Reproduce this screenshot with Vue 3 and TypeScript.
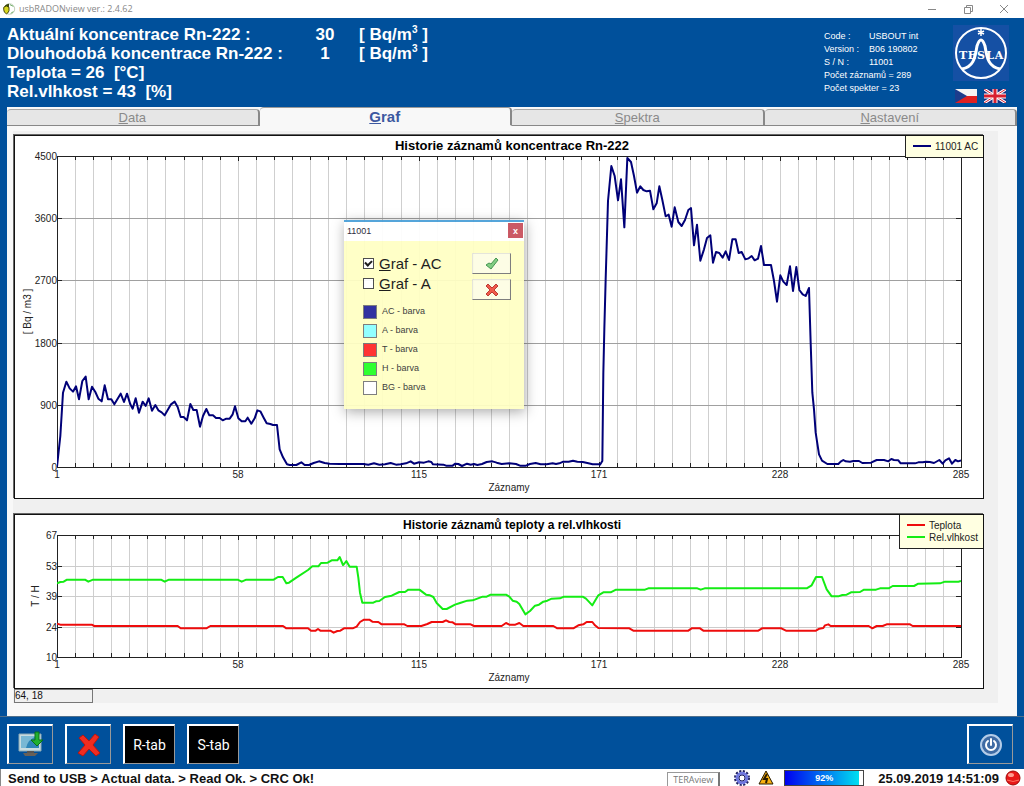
<script setup lang="ts">
import { ref } from 'vue'

interface Series { name: string; color: string; points: string }
interface Chart {
  id: string
  title: string
  titleSize: 'large' | 'small'
  yTitle: string
  height: number
  plotHeight: number
  yLabels: string[]
  gridColor: string
  legend: { x: number; width: number; height: number }
  series: Series[]
}

type Run = [dx: number, dy: number, points: string]

/* Joins recorded runs into one polyline, each run shifted to its own origin. */
function join(runs: Run[]): string {
  return runs
    .map(([dx, dy, pts]) =>
      pts.split(' ').map((p) => {
        const [x, y] = p.split(',').map(Number)
        return `${x + dx},${y + dy}`
      }).join(' '))
    .join(' ')
}

const radon = join([
  [-172, -80, '172,1012 182,920 190,790 200,757 210,777 220,787 229,771 238,810 248,755 258,742 267,810 277,772 287,788 296,808 306,816 315,768 325,810 335,810 344,825 363,793 373,818 382,793 392,825 399,838 408,807 418,850 429,817 438,830 447,807 457,844 467,827 476,843 486,849 495,858 514,825 525,817 534,833 543,863 552,863 562,873 572,824 581,842 591,842 601,892 610,860 620,839 629,858 640,858 649,866 660,866 669,873 680,868 690,868 699,855 706,831 716,867 726,876 737,876 744,865 755,883 765,867 773,843 782,846 792,865 801,882 812,884 820,887 832,887 840,960 850,984 862,1005 870,1007 890,1007 905,999 915,1007 928,1007 942,1001 958,996 975,1001 990,1003 1020,1004'],
  [639, 730, '280,194 295,196 312,192 328,196 345,195 362,191 378,196 392,195 408,192 422,186 432,193 447,189 462,190 475,186 484,188 489,195 520,196 528,199 548,199 556,193 565,194 576,200 591,193 602,196 612,194 622,197 636,194 650,188 667,186 680,190 695,194 718,192 738,194 750,199 768,199 780,194 797,191 812,195 830,195 848,192 858,194 868,192 880,187 896,187 909,184 922,187 938,188 952,191 968,195 990,195'],
  [1599, -80, '30,1006 37,995 40,730 43,600 47,450 54,215 64,110 74,140 84,213 93,150 103,294 112,86 123,98 132,140 141,190 151,171 160,182 170,186 180,184 190,240 200,222 208,171 217,212 227,261 236,256 245,292 254,234 265,278 275,290 285,272 295,242 303,236 312,348 321,286 331,394 342,360 351,326 361,318 369,400 378,368 388,371 398,385 407,366 417,392 427,330 437,330 446,371 455,368 466,390 476,387 485,380 494,393 504,388 513,350 522,407 543,407 552,455 561,517 571,438 580,457 590,467 600,411 609,485 619,413 628,482 638,495 647,500 657,476 662,640 667,790 672,840 677,910'],
  [2229, 820, '57,75 66,94 82,104 115,104 122,97 130,92 137,96 150,97 160,95 177,95 187,101 213,100 230,92 252,92 265,96 274,89 282,92 295,93 302,102 345,102 355,99 368,99 378,97 390,98 402,101 418,92 428,103 436,93 447,87 456,103 466,92 474,96 483,93'],
])

const humidity = join([
  [-172, -77, '172,222 182,218 192,217 202,211 256,211 266,217 280,211 484,211 495,217 508,211 714,211 726,217 740,211 822,211 835,203 849,203 860,222 868,220 890,205 925,182 938,171 956,171 964,161 984,160 996,153 1013,153 1020,143 1030,167'],
  [849, -77, '10,167 19,155 29,172 50,172 55,205 60,250 67,280 100,280 108,276 118,275 135,263 155,259 178,248 195,248 205,241 238,241 258,256 270,258 280,263 290,281 308,299 320,299 345,286 360,281 382,274 398,273 428,262 440,262 452,256 498,256 508,262 518,274 530,277 538,284 556,315 570,305 585,289 597,286 610,277 622,274 635,268 660,267 672,262 728,262 738,268 757,288 775,258 790,249 812,249 828,241 915,241 925,237 1020,237'],
  [1869, -77, '0,237 52,237 62,241 74,237 380,237 395,228 408,203 426,203 440,240 455,261 475,261 487,257 500,256 513,249 540,248 552,241 588,241 600,237 626,237 638,230 702,230 715,223 780,222 795,217 835,217 843,215'],
])

const temperature = join([
  [-172, -77, '172,343 182,346 276,346 284,350 534,350 543,357 620,357 632,350 850,350 860,357 925,357 934,364 948,364 955,359 962,364 992,364 1002,370 1013,365 1022,364'],
  [849, -77, '12,357 38,357 50,352 60,338 72,331 88,331 97,337 115,338 125,345 193,345 202,350 244,350 262,344 275,338 308,338 318,333 328,338 338,339 347,345 392,345 402,350 485,350 498,341 508,346 526,346 538,341 550,350 640,350 652,357 700,357 715,348 730,345 740,338 757,338 765,348 775,356 868,357 880,364 1020,364'],
  [1869, -77, '0,364 25,364 35,357 60,357 70,364 235,364 246,357 304,357 318,364 408,364 418,358 430,356 435,348 445,345 452,350 566,350 577,357 590,350 608,350 620,345 690,345 698,350 843,350'],
])

const plotX = 43
const plotY = 21
const plotWidth = 904
const columns = 50
const xLabels = ['1', '58', '115', '171', '228', '285']

const charts: Chart[] = [
  {
    id: 'radon',
    title: 'Historie záznamů koncentrace Rn-222',
    titleSize: 'large',
    yTitle: '[ Bq / m3 ]',
    height: 363,
    plotHeight: 311,
    yLabels: ['4500', '3600', '2700', '1800', '900', '0'],
    gridColor: '#a0a0a0',
    legend: { x: 891, width: 78, height: 22 },
    series: [{ name: '11001 AC', color: '#000078', points: radon }],
  },
  {
    id: 'climate',
    title: 'Historie záznamů teploty a rel.vlhkosti',
    titleSize: 'small',
    yTitle: 'T / H',
    height: 174,
    plotHeight: 122,
    yLabels: ['67', '53', '39', '24', '10'],
    gridColor: '#cccccc',
    legend: { x: 885, width: 84, height: 34 },
    series: [
      { name: 'Teplota', color: '#ee0c0c', points: temperature },
      { name: 'Rel.vlhkost', color: '#14ec14', points: humidity },
    ],
  },
]

const rowY = (c: Chart, i: number) => plotY + Math.round((c.plotHeight * i) / (c.yLabels.length - 1))
const colX = (i: number) => plotX + Math.round((plotWidth * i) / columns)

const tabs = [
  { key: 'D', rest: 'ata' },
  { key: 'G', rest: 'raf' },
  { key: 'S', rest: 'pektra' },
  { key: 'N', rest: 'astavení' },
]
const activeTab = ref(1)

const readings = [
  { label: 'Aktuální koncentrace Rn-222 :', value: '30' },
  { label: 'Dlouhodobá koncentrace Rn-222 :', value: '1' },
]
const device = [
  ['Code :', 'USBOUT int'],
  ['Version :', 'B06 190802'],
  ['S / N :', '11001'],
]

const showAC = ref(true)
const showA = ref(false)
const swatches = [
  { id: 'ac', label: 'AC - barva' },
  { id: 'a', label: 'A - barva' },
  { id: 't', label: 'T - barva' },
  { id: 'h', label: 'H - barva' },
  { id: 'bg', label: 'BG - barva' },
]
const progress = ref(92)
</script>

<template>
  <div class="window">
    <header class="titlebar">
      <svg class="app-icon" viewBox="0 0 16 16" aria-hidden="true">
        <circle cx="8.500" cy="8" r="6" fill="#fff" stroke="#b8c8b0" />
        <path d="M8 2a6 6 0 0 0-6 6l6 1z" fill="#3c4a10" />
        <path d="M2 6q3-3 6 0v4q-1 3-3 3.500Q2 12 2 9z" fill="#d8d820" stroke="#333300" />
        <path d="M9 3l4 2M10 13l3-2" stroke="#58a050" />
      </svg>
      <span class="app-name">usbRADONview ver.: 2.4.62</span>
      <button class="win-btn" type="button" aria-label="Minimize">
        <svg viewBox="0 0 12 12"><path d="M2 6.500h8" /></svg>
      </button>
      <button class="win-btn" type="button" aria-label="Restore">
        <svg viewBox="0 0 12 12"><path d="M2.500 4.500h6v6h-6zM4.500 4.500v-2h6v6h-2" /></svg>
      </button>
      <button class="win-btn" type="button" aria-label="Close">
        <svg viewBox="0 0 12 12"><path d="M2 2l8 8M10 2l-8 8" /></svg>
      </button>
    </header>

    <section class="summary">
      <div class="readings">
        <div v-for="r in readings" :key="r.label" class="reading">
          <span>{{ r.label }}</span>
          <span class="value">{{ r.value }}</span>
          <span>[ Bq/m<sup>3</sup> ]</span>
        </div>
        <div>Teplota = 26&nbsp; [°C]</div>
        <div>Rel.vlhkost = 43&nbsp; [%]</div>
      </div>
      <div class="device">
        <div v-for="d in device" :key="d[0]" class="device-row"><span>{{ d[0] }}</span><span>{{ d[1] }}</span></div>
        <div>Počet záznamů = 289</div>
        <div>Počet spekter = 23</div>
      </div>
      <div class="brand">
        <svg class="logo" viewBox="0 0 56 56" role="img" aria-label="TESLA">
          <rect width="56" height="56" fill="#1550a4" />
          <circle cx="28" cy="28" r="25" fill="none" stroke="#fff" stroke-width="2" />
          <path d="M9 44C20 42 22 34 24 21q4-12 8 0C34 34 36 42 47 44" fill="none" stroke="#fff" stroke-width="3" />
          <path d="M28 4v7M25 6l6 3M31 6l-6 3" stroke="#fff" stroke-width="1.500" />
          <text x="10" y="34">T</text><text x="19" y="34">E</text><text x="28" y="34">S</text><text x="37" y="34">L</text><text x="46" y="34">A</text>
        </svg>
        <div class="flags">
          <button type="button" aria-label="Čeština">
            <svg viewBox="0 0 22 14"><path fill="#f4f4f4" d="M0 0h22v7H0z" /><path fill="#e02020" d="M0 7h22v7H0z" /><path fill="#1c3c8c" d="M0 0l12 7-12 7z" /></svg>
          </button>
          <button type="button" aria-label="English">
            <svg viewBox="0 0 22 14">
              <path fill="#1a2f80" d="M0 0h22v14H0z" />
              <path d="M0 0l22 14M22 0L0 14" stroke="#fff" stroke-width="3" />
              <path d="M0 0l22 14M22 0L0 14" stroke="#d82030" />
              <path d="M11 0v14M0 7h22" stroke="#fff" stroke-width="5" />
              <path d="M11 0v14M0 7h22" stroke="#d82030" stroke-width="3" />
            </svg>
          </button>
        </div>
      </div>
    </section>

    <main class="workspace">
      <div class="tabs" role="tablist">
        <button
          v-for="(t, i) in tabs" :key="t.key" type="button" role="tab"
          class="tab" :class="{ active: i === activeTab }" :aria-selected="i === activeTab"
          @click="activeTab = i"
        ><u>{{ t.key }}</u>{{ t.rest }}</button>
      </div>

      <div class="sheet">
        <div class="charts">
          <svg v-for="c in charts" :key="c.id" class="chart" :viewBox="`0 0 969 ${c.height}`" role="img" :aria-label="c.title">
            <rect x="0" y="0" width="969" :height="c.height" fill="#fff" />
            <g shape-rendering="crispEdges" stroke-width="1" fill="none">
              <line v-for="i in columns - 1" :key="`v${i}`" :x1="colX(i)" :x2="colX(i)" :y1="plotY" :y2="plotY + c.plotHeight" stroke="#cfcfcf" />
              <line v-for="i in c.yLabels.length - 2" :key="`h${i}`" :x1="plotX" :x2="plotX + plotWidth" :y1="rowY(c, i)" :y2="rowY(c, i)" :stroke="c.gridColor" />
              <g stroke="#222">
                <template v-for="i in columns - 1" :key="`t${i}`">
                  <line :x1="colX(i)" :x2="colX(i)" :y1="plotY" :y2="plotY + (i % 10 ? 4 : 5)" />
                  <line :x1="colX(i)" :x2="colX(i)" :y1="plotY + c.plotHeight - (i % 10 ? 4 : 5)" :y2="plotY + c.plotHeight" />
                </template>
                <template v-for="i in c.yLabels.length - 2" :key="`s${i}`">
                  <line :x1="plotX" :x2="plotX + 5" :y1="rowY(c, i)" :y2="rowY(c, i)" />
                  <line :x1="plotX + plotWidth - 5" :x2="plotX + plotWidth" :y1="rowY(c, i)" :y2="rowY(c, i)" />
                </template>
                <rect :x="plotX" :y="plotY" :width="plotWidth" :height="c.plotHeight" />
              </g>
            </g>
            <svg :x="plotX" :y="plotY" :width="plotWidth" :height="c.plotHeight" :viewBox="`0 0 2712 ${c.plotHeight * 3}`" preserveAspectRatio="none">
              <polyline v-for="s in c.series" :key="s.name" class="curve" :points="s.points" :stroke="s.color" />
            </svg>
            <text class="chart-title" :class="c.titleSize" x="498" y="15">{{ c.title }}</text>
            <text v-for="(l, i) in c.yLabels" :key="l" class="y-label" :x="plotX" :y="rowY(c, i) + 4">{{ l }}</text>
            <text v-for="(l, i) in xLabels" :key="l" class="x-label" :x="colX(i * 10)" :y="plotY + c.plotHeight + 11">{{ l }}</text>
            <text class="x-label" x="495" :y="plotY + c.plotHeight + 24">Záznamy</text>
            <text class="x-label" :transform="`translate(${c.id === 'radon' ? 17 : 25} ${plotY + c.plotHeight / 2}) rotate(-90)`">{{ c.yTitle }}</text>
            <rect :x="c.legend.x" y="0" :width="c.legend.width" :height="c.legend.height" fill="#ffffe1" stroke="#222" shape-rendering="crispEdges" />
            <g v-for="(s, i) in c.series" :key="`l${s.name}`">
              <path :d="`M${c.legend.x + 8} ${11 + i * 12}h18`" :stroke="s.color" stroke-width="2" />
              <text class="legend-text" :x="c.legend.x + 30" :y="15 + i * 12">{{ s.name }}</text>
            </g>
            <path :d="`M0 ${c.height}V0H969`" fill="none" stroke="#666" stroke-width="2" shape-rendering="crispEdges" />
            <rect x="0" y="0" width="969" :height="c.height" fill="none" stroke="#111" shape-rendering="crispEdges" />
          </svg>
          <output class="coords">64, 18</output>
        </div>
      </div>

      <form class="dialog" aria-label="11001" @submit.prevent>
        <div class="dialog-bar"><span>11001</span><button type="button" aria-label="Close">x</button></div>
        <div class="dialog-body">
          <div class="options">
            <label class="check"><input v-model="showAC" type="checkbox"><span><u>G</u>raf - AC</span></label>
            <label class="check"><input v-model="showA" type="checkbox"><span><u>G</u>raf - A</span></label>
            <div class="swatches">
              <div v-for="s in swatches" :key="s.id" class="swatch-row">
                <button :id="`swatch-${s.id}`" type="button" class="swatch" :class="s.id" :aria-label="s.label" />
                <label :for="`swatch-${s.id}`">{{ s.label }}</label>
              </div>
            </div>
          </div>
          <div class="actions">
            <button type="submit" aria-label="OK">
              <svg viewBox="0 0 14 14"><path d="M1 8l3-2 2 1 5-6 2 2-7 9z" fill="#7ccc7c" stroke="#3c9048" /></svg>
            </button>
            <button type="button" aria-label="Cancel">
              <svg viewBox="0 0 14 14"><path d="M1 3l2-2 4 4 4-4 2 2-4 4 4 4-2 2-4-4-4 4-2-2 4-4z" fill="#f05040" stroke="#b83028" /></svg>
            </button>
          </div>
        </div>
      </form>
    </main>

    <nav class="toolbar">
      <button class="tool" type="button" aria-label="Download data">
        <svg viewBox="0 0 28 28">
          <path d="M2 3h22v17H2z" fill="#c8dce0" stroke="#8aa8b4" />
          <path d="M4 5h18v12H4z" fill="#2f86b8" />
          <path d="M4 5h16q-9 3-11 12H4z" fill="#78b8d4" />
          <path d="M10 20h7v3h-7z" fill="#555" /><path d="M6 22h15l-3 3H8z" fill="#686058" />
          <path d="M18 1h4v8h4l-6 6-6-6h4z" fill="#20b030" stroke="#087018" />
        </svg>
      </button>
      <button class="tool" type="button" aria-label="Delete">
        <svg viewBox="0 0 28 28"><path d="M4 7l4-3 6 6 6-7 4 3-6 8 7 8-4 3-7-7-6 7-5-3 7-8z" fill="#f02c20" stroke="#b81410" /></svg>
      </button>
      <button class="tool text" type="button">R-tab</button>
      <button class="tool text" type="button">S-tab</button>
      <button class="tool power" type="button" aria-label="Exit">
        <svg viewBox="0 0 28 28">
          <circle cx="14" cy="14" r="10" fill="#3f6ba4" stroke="#b4cce8" stroke-width="2" />
          <path d="M11 10a5 5 0 1 0 6 0M14 8v6" fill="none" stroke="#fff" stroke-width="2" stroke-linecap="round" />
        </svg>
      </button>
    </nav>

    <footer class="status">
      <span class="message">Send to USB &gt; Actual data. &gt; Read Ok. &gt; CRC Ok!</span>
      <span class="tera">TERAview</span>
      <svg class="gear" viewBox="0 0 16 16" aria-hidden="true">
        <circle cx="8" cy="8" r="6.500" fill="none" stroke="#202060" stroke-width="3" stroke-dasharray="2 1.400" />
        <circle cx="8" cy="8" r="4.800" fill="none" stroke="#7078e0" stroke-width="3" />
        <circle cx="8" cy="8" r="3" fill="#fff" stroke="#202060" />
      </svg>
      <svg class="warn" viewBox="0 0 16 16" aria-hidden="true">
        <path d="M8 1l7 13H1z" fill="#f8b010" stroke="#2a1c00" stroke-linejoin="round" />
        <path d="M9 4L6 9h3l-1 4" fill="none" stroke="#2a1c00" stroke-width="2" />
      </svg>
      <div class="progress" role="progressbar" :aria-valuenow="progress" aria-valuemin="0" aria-valuemax="100">
        <div class="fill" :style="{ width: `${progress + 2}%` }" />
        <span>{{ progress }}%</span>
      </div>
      <time class="clock">25.09.2019 14:51:09</time>
      <svg class="led" viewBox="0 0 16 16" aria-hidden="true">
        <circle cx="8" cy="8" r="7" fill="#e81818" stroke="#a00808" /><ellipse cx="6" cy="5" rx="3" ry="2" fill="#ff9c90" />
        <path d="M2 10q6 3 12 0" fill="none" stroke="#ff7060" />
      </svg>
    </footer>
  </div>
</template>

<style>
body { background: #fff; }
</style>

<style scoped>
.window { min-height: 100vh; display: flex; flex-direction: column; background: #00509b; font-family: "Liberation Sans", Arial, sans-serif; color: #111; overflow: hidden; }
button { font-family: inherit; padding: 0; margin: 0; box-sizing: border-box; }
.titlebar { display: flex; align-items: center; height: 18px; background: #fff; padding: 0 2px; }
.app-icon { width: 14px; height: 14px; }
.app-name { flex: 1; margin-left: 3px; font: 9px/18px "Open Sans", "Noto Sans", sans-serif; color: #888; }
.win-btn { width: 36px; height: 16px; border: 0; background: none; display: grid; place-items: center; }
.win-btn svg { width: 12px; height: 12px; fill: none; stroke: #888; }

.summary { display: flex; padding: 7px 14px 0 7px; height: 82px; color: #fff; }
.readings { flex: 1; font-weight: bold; font-size: 17px; line-height: 19px; white-space: nowrap; }
.reading { display: grid; grid-template-columns: 284px 68px 1fr; }
.value { text-align: center; }
sup { font-size: 10px; line-height: 1px; }
.device { width: 129px; padding-top: 5px; font-size: 9px; line-height: 13px; white-space: nowrap; }
.device-row { display: grid; grid-template-columns: 45px 1fr; }
.brand { width: 57px; display: flex; flex-direction: column; }
.logo { width: 56px; height: 56px; }
.logo text { fill: #fff; font: bold 11px "DejaVu Serif", serif; text-anchor: middle; }
.flags { display: flex; gap: 7px; padding: 8px 2px 0; }
.flags button { width: 22px; height: 14px; border: 0; background: none; display: block; }
.flags svg { display: block; width: 22px; height: 14px; }

.workspace { position: relative; margin: 0 7px; background: #f8f8f8; flex: 1; }
.tabs { display: flex; align-items: flex-end; height: 19px; }
.tab { flex: 1; height: 17px; border: 1px solid; border-width: 1px 2px 1px 0; border-color: #a8a8a8 #888 #888; border-radius: 4px 4px 0 0; background: #e6e6e6; color: #8a8a8a; font-size: 13px; line-height: 15px; }
.tab.active { height: 19px; border-color: #999 #888 transparent; background: #f8f8f8; color: #3c58a0; font-weight: bold; font-size: 15px; line-height: 17px; }
.sheet { padding: 5px 19px 13px 6px; }
.charts { background: #f0f0f0; padding: 4px 15px 0 1px; display: flex; flex-direction: column; align-items: flex-start; }
.chart { display: block; width: 100%; height: auto; overflow: visible; font-size: 10px; }
.chart + .chart { margin-top: 16px; }
.chart text { fill: #222; }
.curve { fill: none; stroke-width: 2; stroke-linejoin: round; vector-effect: non-scaling-stroke; }
.chart .chart-title { font-weight: bold; text-anchor: middle; fill: #000; }
.chart-title.large { font-size: 13px; }
.chart-title.small { font-size: 12px; }
.y-label { text-anchor: end; }
.x-label { text-anchor: middle; }
.coords { box-sizing: border-box; width: 79px; height: 14px; margin-top: 1px; border: 1px solid #777; font-size: 10px; line-height: 12px; }

.dialog { position: absolute; left: 337px; top: 113px; width: 180px; height: 189px; box-sizing: border-box; display: flex; flex-direction: column; border-top: 2px solid #4ba0d8; box-shadow: 1px 3px 12px rgba(0, 0, 0, 0.35); opacity: 0.94; }
.dialog-bar { display: flex; justify-content: space-between; height: 19px; background: #fff; padding-left: 3px; font-size: 9px; line-height: 19px; color: #223; }
.dialog-bar button { width: 15px; height: 15px; margin: 1px 1px 0 0; border: 0; background: #c8505c; color: #fff; font-size: 9px; line-height: 12px; font-weight: bold; }
.dialog-body { flex: 1; background: #ffffc4; display: flex; justify-content: space-between; padding: 12px 13px 0 19px; }
.check { display: flex; align-items: center; height: 20px; font-size: 15px; gap: 5px; }
.check input { appearance: none; width: 11px; height: 11px; margin: 0; border: 1px solid #444; background: #fff; display: grid; place-items: center; }
.check input:checked::after { content: ""; width: 5px; height: 3px; border: solid #111; border-width: 0 0 2px 2px; transform: rotate(-45deg); margin-bottom: 2px; }
.swatches { padding-top: 9px; }
.swatch-row { display: flex; align-items: center; gap: 5px; height: 19px; font-size: 9px; color: #333; }
.swatch-row label { margin-top: -2px; }
.swatch { width: 14px; height: 14px; border: 1px solid #777; }
.ac { background: #26269c; }
.a { background: #8cffff; }
.t { background: #ff2828; }
.h { background: #24ff24; }
.bg { background: #fff; }
.actions { display: flex; flex-direction: column; gap: 5px; }
.actions button { width: 39px; height: 21px; background: #fdfde4; border: 1px solid; border-color: #e4e4d8 #777 #777 #e4e4d8; display: grid; place-items: center; }
.actions svg { width: 14px; height: 14px; }

.toolbar { display: flex; align-items: flex-start; padding: 7px 11px 5px 7px; border-top: 1px solid #4f6f8c; background: #00509b; height: 40px; }
.tool { width: 46px; height: 40px; margin-right: 12px; border: solid; border-width: 2px 1px 1px 2px; border-color: #fff #999 #999 #fff; background: #00509b; display: grid; place-items: center; }
.tool svg { width: 28px; height: 28px; }
.tool.text { width: 52px; background: #000; color: #fff; font: 14px Roboto, sans-serif; }
.tool.power { margin: 0 0 0 auto; }

.status { display: flex; align-items: center; height: 18px; background: #fff; padding: 0 3px 0 7px; border-left: 1px solid #888; overflow: hidden; }
.message { flex: 1; font-weight: bold; font-size: 13px; white-space: nowrap; }
.tera { width: 53px; height: 15px; box-sizing: border-box; border: 1px solid #999; border-bottom: 0; border-right: 2px solid #777; margin-top: 3px; margin-right: 14px; text-align: center; font: 9px/14px "Open Sans", "Noto Sans", sans-serif; color: #777; }
.gear, .warn, .led { width: 16px; height: 16px; }
.warn { margin: 0 10px 0 8px; }
.progress { position: relative; width: 80px; height: 16px; box-sizing: border-box; border: 1px solid #444; background: #fff; }
.fill { height: 100%; background: linear-gradient(90deg, #0000f0, #00e0f0); }
.progress span { position: absolute; inset: 0; text-align: center; color: #fff; font: bold 9px/14px "Liberation Sans", sans-serif; }
.clock { font-weight: bold; font-size: 13px; margin: 0 6px 0 14px; }
</style>
